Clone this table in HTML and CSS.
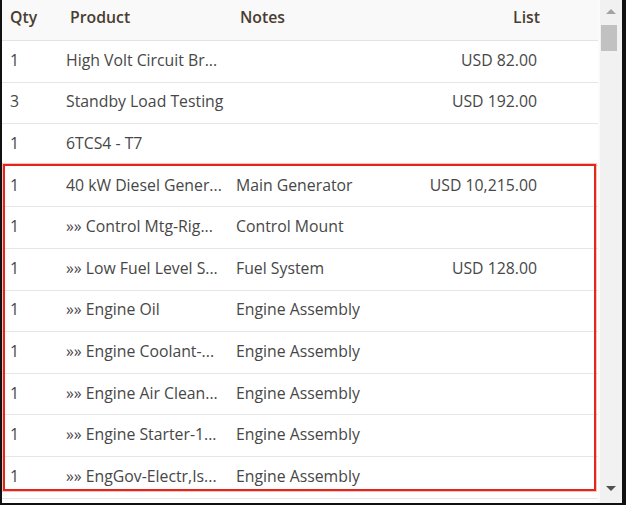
FILE: index.html
```html
<!DOCTYPE html>
<html>
<head>
<meta charset="utf-8">
<link rel="stylesheet" href="styles.css">
</head>
<body>
<div class="frame">
  <div class="grid">
    <div class="row head">
      <div class="c qty">Qty</div>
      <div class="c prod">Product</div>
      <div class="c notes">Notes</div>
      <div class="c list">List</div>
      <div class="c extra"></div>
    </div>
    <div class="row"><div class="c qty">1</div><div class="c prod">High Volt Circuit Br...</div><div class="c notes"></div><div class="c list">USD 82.00</div><div class="c extra"></div></div>
    <div class="row"><div class="c qty">3</div><div class="c prod">Standby Load Testing</div><div class="c notes"></div><div class="c list">USD 192.00</div><div class="c extra"></div></div>
    <div class="row"><div class="c qty">1</div><div class="c prod">6TCS4 - T7</div><div class="c notes"></div><div class="c list"></div><div class="c extra"></div></div>
    <div class="row"><div class="c qty">1</div><div class="c prod">40 kW Diesel Gener...</div><div class="c notes">Main Generator</div><div class="c list">USD 10,215.00</div><div class="c extra"></div></div>
    <div class="row"><div class="c qty">1</div><div class="c prod">»» Control Mtg-Rig...</div><div class="c notes">Control Mount</div><div class="c list"></div><div class="c extra"></div></div>
    <div class="row"><div class="c qty">1</div><div class="c prod">»» Low Fuel Level S...</div><div class="c notes">Fuel System</div><div class="c list">USD 128.00</div><div class="c extra"></div></div>
    <div class="row"><div class="c qty">1</div><div class="c prod">»» Engine Oil</div><div class="c notes">Engine Assembly</div><div class="c list"></div><div class="c extra"></div></div>
    <div class="row"><div class="c qty">1</div><div class="c prod">»» Engine Coolant-...</div><div class="c notes">Engine Assembly</div><div class="c list"></div><div class="c extra"></div></div>
    <div class="row"><div class="c qty">1</div><div class="c prod">»» Engine Air Clean...</div><div class="c notes">Engine Assembly</div><div class="c list"></div><div class="c extra"></div></div>
    <div class="row"><div class="c qty">1</div><div class="c prod">»» Engine Starter-1...</div><div class="c notes">Engine Assembly</div><div class="c list"></div><div class="c extra"></div></div>
    <div class="row"><div class="c qty">1</div><div class="c prod">»» EngGov-Electr,Is...</div><div class="c notes">Engine Assembly</div><div class="c list"></div><div class="c extra"></div></div>
  </div>
  <div class="scrollbar">
    <div class="arrow up"></div>
    <div class="thumb"></div>
    <div class="track"></div>
    <div class="arrow down"></div>
  </div>
  <div class="highlight"></div>
</div>
</body>
</html>
```
FILE: styles.css
```css
html, body {
  margin: 0;
  padding: 0;
  background: #ffffff;
}
.frame {
  position: relative;
  width: 626px;
  height: 505px;
  box-sizing: border-box;
  border-left: 2px solid #111;
  border-right: 4px solid #111;
  border-bottom: 2px solid #111;
  display: flex;
  overflow: hidden;
  font-family: "Open Sans", "Noto Sans", sans-serif;
  font-size: 15.8px;
  color: #474747;
}
.grid {
  width: 596px;
  flex: none;
  overflow: hidden;
  border-right: 2px solid #fbfbfb;
}
.row {
  display: grid;
  grid-template-columns: 56px 170px 201px 120px 49px;
  height: 41.6px;
  box-sizing: border-box;
  border-bottom: 1px solid #e6e6e6;
  align-items: center;
}
.row.head {
  height: 41px;
  background: #f9f9f9;
  border-bottom: 1px solid #e3e3e3;
  color: #4a3d30;
  font-weight: 600;
  padding-bottom: 4px;
}
.c {
  white-space: nowrap;
  overflow: hidden;
  text-overflow: ellipsis;
  padding-left: 8px;
  padding-bottom: 3px;
}
.head .prod, .head .notes { padding-left: 12px; }
.list {
  text-align: right;
  padding-left: 0;
  padding-right: 12px;
}
.head .list { padding-right: 9px; }
.scrollbar {
  width: 22px;
  flex: none;
  background: #f1f1f1;
  display: flex;
  flex-direction: column;
  align-items: flex-start;
}
.arrow {
  width: 0;
  height: 0;
  margin-left: 6px;
  border-left: 5px solid transparent;
  border-right: 5px solid transparent;
}
.arrow.up {
  margin-top: 9px;
  border-bottom: 5px solid #a3a3a3;
}
.arrow.down {
  margin-bottom: 12px;
  border-top: 5px solid #505050;
}
.thumb {
  margin-top: 11px;
  margin-left: 1px;
  width: 16px;
  height: 26px;
  background: #c1c1c1;
}
.track { flex: 1; }
.highlight {
  position: absolute;
  left: 1px;
  top: 164px;
  width: 593px;
  height: 327px;
  box-sizing: border-box;
  border: 2px solid #e3261c;
  box-shadow: 0 0 0 1px rgba(235, 80, 70, 0.35);
}
```
